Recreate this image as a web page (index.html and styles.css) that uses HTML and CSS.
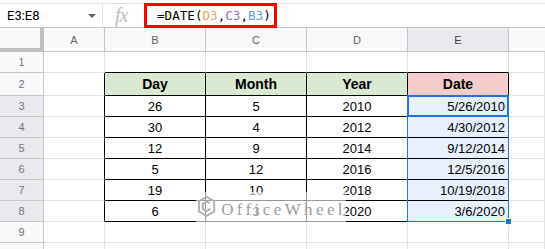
FILE: index.html
```html
<!DOCTYPE html>
<html>
<head>
<meta charset="utf-8">
<link rel="stylesheet" href="styles.css">
</head>
<body>
<div class="app">
  <div class="fbar">
    <div class="namebox"><span class="range">E3:E8</span><span class="caret"></span></div>
    <div class="fx">fx</div>
    <div class="formula">=DATE(<span class="rd">D3</span>,<span class="rc">C3</span>,<span class="rb">B3</span>)</div>
  </div>
  <div class="sheet">
    <div class="grid">
      <div class="corner"></div>
      <div class="ch">A</div><div class="ch">B</div><div class="ch">C</div><div class="ch">D</div><div class="ch sel">E</div><div class="ch last"></div>

      <div class="rh">1</div><div class="c"></div><div class="c tt"></div><div class="c tt"></div><div class="c tt"></div><div class="c tt"></div><div class="c"></div>

      <div class="rh">2</div><div class="c tl"></div>
      <div class="c t hg">Day</div><div class="c t hg">Month</div><div class="c t hg">Year</div><div class="c t hr">Date</div><div class="c"></div>

      <div class="rh sel">3</div><div class="c tl"></div><div class="c t">26</div><div class="c t">5</div><div class="c t">2010</div><div class="c t dt">5/26/2010</div><div class="c"></div>
      <div class="rh sel">4</div><div class="c tl"></div><div class="c t">30</div><div class="c t">4</div><div class="c t">2012</div><div class="c t dt">4/30/2012</div><div class="c"></div>
      <div class="rh sel">5</div><div class="c tl"></div><div class="c t">12</div><div class="c t">9</div><div class="c t">2014</div><div class="c t dt">9/12/2014</div><div class="c"></div>
      <div class="rh sel">6</div><div class="c tl"></div><div class="c t">5</div><div class="c t">12</div><div class="c t">2016</div><div class="c t dt">12/5/2016</div><div class="c"></div>
      <div class="rh sel">7</div><div class="c tl"></div><div class="c t">19</div><div class="c t">10</div><div class="c t">2018</div><div class="c t dt">10/19/2018</div><div class="c"></div>
      <div class="rh sel">8</div><div class="c tl"></div><div class="c t">6</div><div class="c t">3</div><div class="c t">2020</div><div class="c t dt">3/6/2020</div><div class="c"></div>
      <div class="rh">9</div><div class="c"></div><div class="c"></div><div class="c"></div><div class="c"></div><div class="c"></div><div class="c"></div>
      <div class="rh">10</div><div class="c"></div><div class="c"></div><div class="c"></div><div class="c"></div><div class="c"></div><div class="c"></div>
    </div>

    <div class="range-box"><span class="handle"></span></div>
    <div class="active-box"></div>

    <div class="watermark">
      <svg class="wm-logo" width="30" height="36" viewBox="0 0 30 36">
        <polygon points="15,2 27,9 27,25 15,32 3,25 3,9" fill="none" stroke="#b0b0b0" stroke-width="3"/>
        <polyline points="20,12 15,9.5 9,13 9,21 15,24.5 21,21" fill="none" stroke="#b0b0b0" stroke-width="3"/>
      </svg>
      <span class="wm-text">OfficeWheel</span>
    </div>
  </div>
</div>
</body>
</html>
```

FILE: styles.css
```css
* { box-sizing: border-box; }
html, body { margin: 0; padding: 0; background: #fff; }
.app { width: 545px; height: 249px; overflow: hidden; font-family: "Liberation Sans", Arial, sans-serif; }

.fbar {
  position: relative;
  margin-top: 3px;
  height: 25px;
  border-top: 1px solid #e0e0e0;
  border-bottom: 1px solid #c4c7c5;
  display: flex;
  align-items: center;
}
.namebox {
  width: 103px;
  height: 100%;
  border-right: 1px solid #e0e0e0;
  display: flex;
  align-items: center;
  justify-content: space-between;
  padding: 0 6px 0 7px;
}
.range { color: #000; font-family: Roboto, "Liberation Sans", sans-serif; font-size: 13px; }
.caret {
  width: 0; height: 0;
  border-left: 4px solid transparent;
  border-right: 4px solid transparent;
  border-top: 4px solid #666;
}
.fx {
  width: 42px;
  padding-left: 12px;
  font-family: "Liberation Serif", serif;
  font-style: italic;
  font-size: 20px;
  color: #c0c0c0;
  letter-spacing: -1px;
}
.formula {
  position: absolute;
  left: 144px;
  top: -1px;
  width: 133px;
  height: 25px;
  border: 3px solid #ff0000;
  padding-left: 10px;
  font-family: "DejaVu Sans Mono", monospace;
  font-size: 12.6px;
  line-height: 19px;
  color: #000;
}
.rd { color: #f0a05c; }
.rc { color: #8e6fc0; }
.rb { color: #5aa2d8; }

.sheet { position: relative; }
.grid {
  display: grid;
  grid-template-columns: 44px 61px 101px 101px 101px 101px 1fr;
  grid-template-rows: 24px 21px 23px repeat(8, 21px);
  font-size: 13px;
}
.grid > div { border-right: 1px solid #e2e3e3; border-bottom: 1px solid #e2e3e3; }
.grid > .corner {
  background: #f8f9fa;
  border-right: 4px solid #c0c0c0;
  border-bottom: 4px solid #c0c0c0;
}
.grid > .ch {
  background: #f8f9fa;
  border-color: #c4c7c5;
  color: #5f6368;
  font-size: 11px;
  display: flex; align-items: center; justify-content: center;
}
.grid > .ch.sel { background: #e8eaed; color: #3c4043; }
.grid > .ch.last { border-right: none; }
.grid > .rh {
  background: #f8f9fa;
  border-color: #c4c7c5;
  color: #70757a;
  font-size: 11px;
  display: flex; align-items: center; justify-content: center;
}
.grid > .rh.sel { background: #e8eaed; }
.c { display: flex; align-items: center; justify-content: center; }
.grid > .tt { border-bottom-color: #000; }
.grid > .tl { border-right-color: #000; }
.grid > .t { border-right-color: #000; border-bottom-color: #000; color: #000; }
.hg { background: #d9ead3; color: #274e13; font-weight: bold; font-size: 14px; }
.hr { background: #f4cccc; color: #660000; font-weight: bold; font-size: 14px; }
.dt { justify-content: flex-end; padding-right: 3px; background: #e8f0fe; }

.range-box {
  position: absolute;
  left: 407px;
  top: 67px;
  width: 102px;
  height: 127px;
  border: 1px solid #1a73e8;
}
.handle {
  position: absolute;
  right: -4px;
  bottom: -4px;
  width: 7px;
  height: 7px;
  background: #1a73e8;
  border: 1px solid #fff;
}
.active-box {
  position: absolute;
  left: 407px;
  top: 67px;
  width: 102px;
  height: 22px;
  border: 2px solid #1a73e8;
}
.watermark {
  position: absolute;
  left: 196px;
  top: 160px;
  width: 150px;
  height: 38px;
  background: linear-gradient(rgba(255,255,255,0) 0, rgba(255,255,255,0) 4px, rgba(255,255,255,0.6) 4px, rgba(255,255,255,0.6) 34px, rgba(255,255,255,0) 34px);
  display: flex;
  align-items: center;
  gap: 5px;
  padding-left: 1px;
}
.wm-text {
  font-family: "Liberation Serif", serif;
  font-size: 17px;
  letter-spacing: 3.4px;
  color: #9c9c9c;
  margin-top: 6px;
}
```
